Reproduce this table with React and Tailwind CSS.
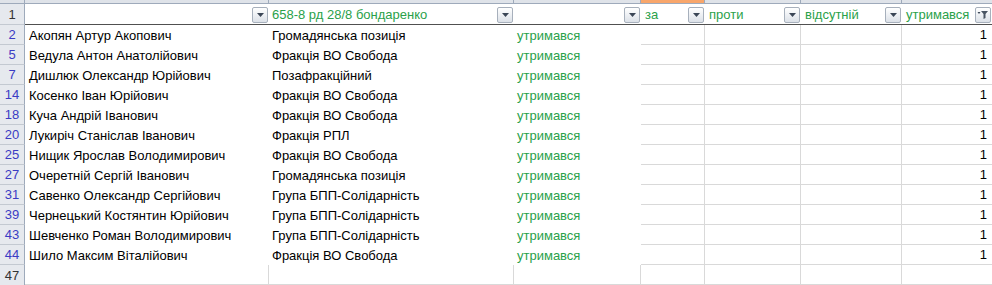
import React from "react";

const rows = [
  ["2", "Акопян Артур Акопович", "Громадянська позиція"],
  ["5", "Ведула Антон Анатолійович", "Фракція ВО Свобода"],
  ["7", "Дишлюк Олександр Юрійович", "Позафракційний"],
  ["14", "Косенко Іван Юрійович", "Фракція ВО Свобода"],
  ["18", "Куча Андрій Іванович", "Фракція ВО Свобода"],
  ["20", "Лукиріч Станіслав Іванович", "Фракція РПЛ"],
  ["25", "Нищик Ярослав Володимирович", "Фракція ВО Свобода"],
  ["27", "Очеретній Сергій Іванович", "Громадянська позиція"],
  ["31", "Савенко Олександр Сергійович", "Група БПП-Солідарність"],
  ["39", "Чернецький Костянтин Юрійович", "Група БПП-Солідарність"],
  ["43", "Шевченко Роман Володимирович", "Група БПП-Солідарність"],
  ["44", "Шило Максим Віталійович", "Фракція ВО Свобода"],
];

function Drop({ filter }) {
  return (
    <div className="ml-auto mr-[1px] mt-[1px] flex h-[16px] w-[16px] shrink-0 items-center justify-center rounded-[2px] border border-[#a7b0bc] bg-gradient-to-b from-[#ffffff] to-[#dce1e8]">
      {filter ? (
        <svg width="12" height="11" viewBox="0 0 12 11">
          <path d="M4 2 L11 2 L8.5 5 L8.5 9 L6.5 10 L6.5 5 Z" fill="#4a5563" />
          <path d="M0.5 3 L3.5 3 L2 5 Z" fill="#3b4656" />
        </svg>
      ) : (
        <svg width="7" height="4" viewBox="0 0 7 4">
          <path d="M0 0 L7 0 L3.5 4 Z" fill="#3b4656" />
        </svg>
      )}
    </div>
  );
}

const green = "text-[#2aa14a]";

export default function App() {
  const font = { fontFamily: '"Liberation Sans", Arial, sans-serif' };
  return (
    <div
      className="grid h-[285px] w-[992px] grid-cols-[25px_244px_245px_127px_64px_96px_101px_90px] grid-rows-[4px_21px_repeat(13,20px)] overflow-hidden bg-white text-[13px] leading-none text-black"
      style={font}
    >
      {/* column header strip */}
      <div className="border-b border-r border-[#9eaabb] bg-[#dfe3e9]" />
      <div className="border-b border-r border-[#9eaabb] bg-[#dfe3e9]" />
      <div className="border-b border-r border-[#9eaabb] bg-[#dfe3e9]" />
      <div className="border-b border-r border-[#9eaabb] bg-[#dfe3e9]" />
      <div className="border-b border-r border-[#9eaabb] bg-[#f8a66b]" />
      <div className="border-b border-r border-[#9eaabb] bg-[#dfe3e9]" />
      <div className="border-b border-r border-[#9eaabb] bg-[#dfe3e9]" />
      <div className="border-b border-[#9eaabb] bg-[#dfe3e9]" />

      {/* row 1 */}
      <div className="flex items-center justify-center border-b border-r border-b-[#c3c9d1] border-r-[#9eaabb] bg-[#e6e9ee] text-[#333]">
        1
      </div>
      <div className="flex items-center border-b border-[#505050] pl-[4px]">
        <Drop />
      </div>
      <div className={`flex items-center border-b border-[#505050] pl-[3px] ${green}`}>
        <span>658-8 рд 28/8 бондаренко</span>
        <Drop />
      </div>
      <div className="flex items-center border-b border-[#505050] pl-[3px]">
        <Drop />
      </div>
      <div className={`flex items-center border-b border-[#505050] pl-[4px] ${green}`}>
        <span>за</span>
        <Drop />
      </div>
      <div className={`flex items-center border-b border-[#505050] pl-[4px] ${green}`}>
        <span>проти</span>
        <Drop />
      </div>
      <div className={`flex items-center border-b border-[#505050] pl-[4px] ${green}`}>
        <span>відсутній</span>
        <Drop />
      </div>
      <div className={`flex items-center border-b border-[#505050] pl-[4px] ${green}`}>
        <span>утримався</span>
        <Drop filter />
      </div>

      {rows.map(([n, name, party]) => (
        <React.Fragment key={n}>
          <div className="flex items-center justify-center border-b border-r border-b-[#c3c9d1] border-r-[#9eaabb] bg-[#e6e9ee] text-[#3b3bc4]">
            {n}
          </div>
          <div className="flex items-center pl-[4px]">{name}</div>
          <div className="flex items-center pl-[3px]">{party}</div>
          <div className={`flex items-center pl-[3px] ${green}`}>утримався</div>
          <div className="border-b border-r border-[#d9d9d9]" />
          <div className="border-b border-r border-[#d9d9d9]" />
          <div className="border-b border-r border-[#d9d9d9]" />
          <div className="flex items-center justify-end border-b border-[#d9d9d9] pr-[5px]">1</div>
        </React.Fragment>
      ))}

      {/* row 47 */}
      <div className="flex items-center justify-center border-r border-r-[#9eaabb] bg-[#e6e9ee] text-[#333]">
        47
      </div>
      <div className="border-b border-r border-[#d9d9d9]" />
      <div className="border-b border-r border-[#d9d9d9]" />
      <div className="border-b border-r border-[#d9d9d9]" />
      <div className="border-b border-r border-[#d9d9d9]" />
      <div className="border-b border-r border-[#d9d9d9]" />
      <div className="border-b border-r border-[#d9d9d9]" />
      <div className="border-b border-[#d9d9d9]" />
    </div>
  );
}
